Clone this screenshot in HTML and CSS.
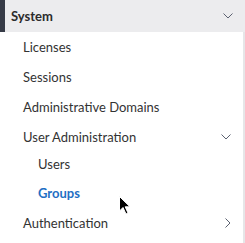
FILE: index.html
```
<!DOCTYPE html>
<html>
<head>
<meta charset="utf-8">
<link rel="stylesheet" href="styles.css">
</head>
<body>
<nav class="nav">
  <div class="section-head">
    <span class="section-title">System</span>
    <svg class="chev" width="10" height="6" viewBox="0 0 10 6"><path d="M0.5 0.5 L5 5 L9.5 0.5" fill="none" stroke="#5b6170" stroke-width="1"/></svg>
  </div>
  <ul class="menu">
    <li class="item">Licenses</li>
    <li class="item">Sessions</li>
    <li class="item">Administrative Domains</li>
    <li class="item has-sub">User Administration
      <svg class="chev" width="10" height="6" viewBox="0 0 10 6"><path d="M0.5 0.5 L5 5 L9.5 0.5" fill="none" stroke="#5b6170" stroke-width="1"/></svg>
    </li>
    <li class="subgroup">
      <ul class="submenu">
        <li class="sub">Users</li>
        <li class="sub active">Groups</li>
      </ul>
    </li>
    <li class="item has-sub last">Authentication
      <svg class="chev" width="6" height="10" viewBox="0 0 6 10"><path d="M0.5 0.5 L5 5 L0.5 9.5" fill="none" stroke="#5b6170" stroke-width="1"/></svg>
    </li>
  </ul>
  <svg class="cursor" width="13" height="19" viewBox="0 0 13 19"><path d="M0.5 0.5 L0.5 15 L4 11.5 L7 18 L9 17 L6.2 10.8 L11 10.8 Z" fill="#000" stroke="#fff" stroke-width="1"/></svg>
</nav>
</body>
</html>
```
FILE: styles.css
```
html, body {
  margin: 0;
  padding: 0;
  background: #fff;
}
.nav {
  position: relative;
  width: 243px;
  height: 243px;
  border-right: 2px solid #e6e6e8;
  font-family: "Lato", sans-serif;
  font-size: 13px;
  color: #333;
}
.section-head {
  height: 32px;
  background: #ececee;
  border-left: 5px solid #363b47;
  display: flex;
  align-items: center;
  justify-content: space-between;
  padding: 0 12px 0 6px;
  margin-right: -2px;
}
.section-title {
  font-weight: 700;
  color: #2b2b2b;
}
.menu, .submenu {
  list-style: none;
  margin: 0;
  padding: 0;
}
.item {
  height: 30px;
  display: flex;
  align-items: center;
  justify-content: space-between;
  padding: 0 12px 0 23px;
}
.submenu {
  margin-top: -3px;
}
.sub {
  height: 29px;
  display: flex;
  align-items: center;
  padding-left: 38px;
}
.last {
  margin-top: 1px;
}
.active {
  font-weight: 700;
  color: #1f6fc4;
}
.cursor {
  position: absolute;
  left: 119px;
  top: 196px;
}
```
